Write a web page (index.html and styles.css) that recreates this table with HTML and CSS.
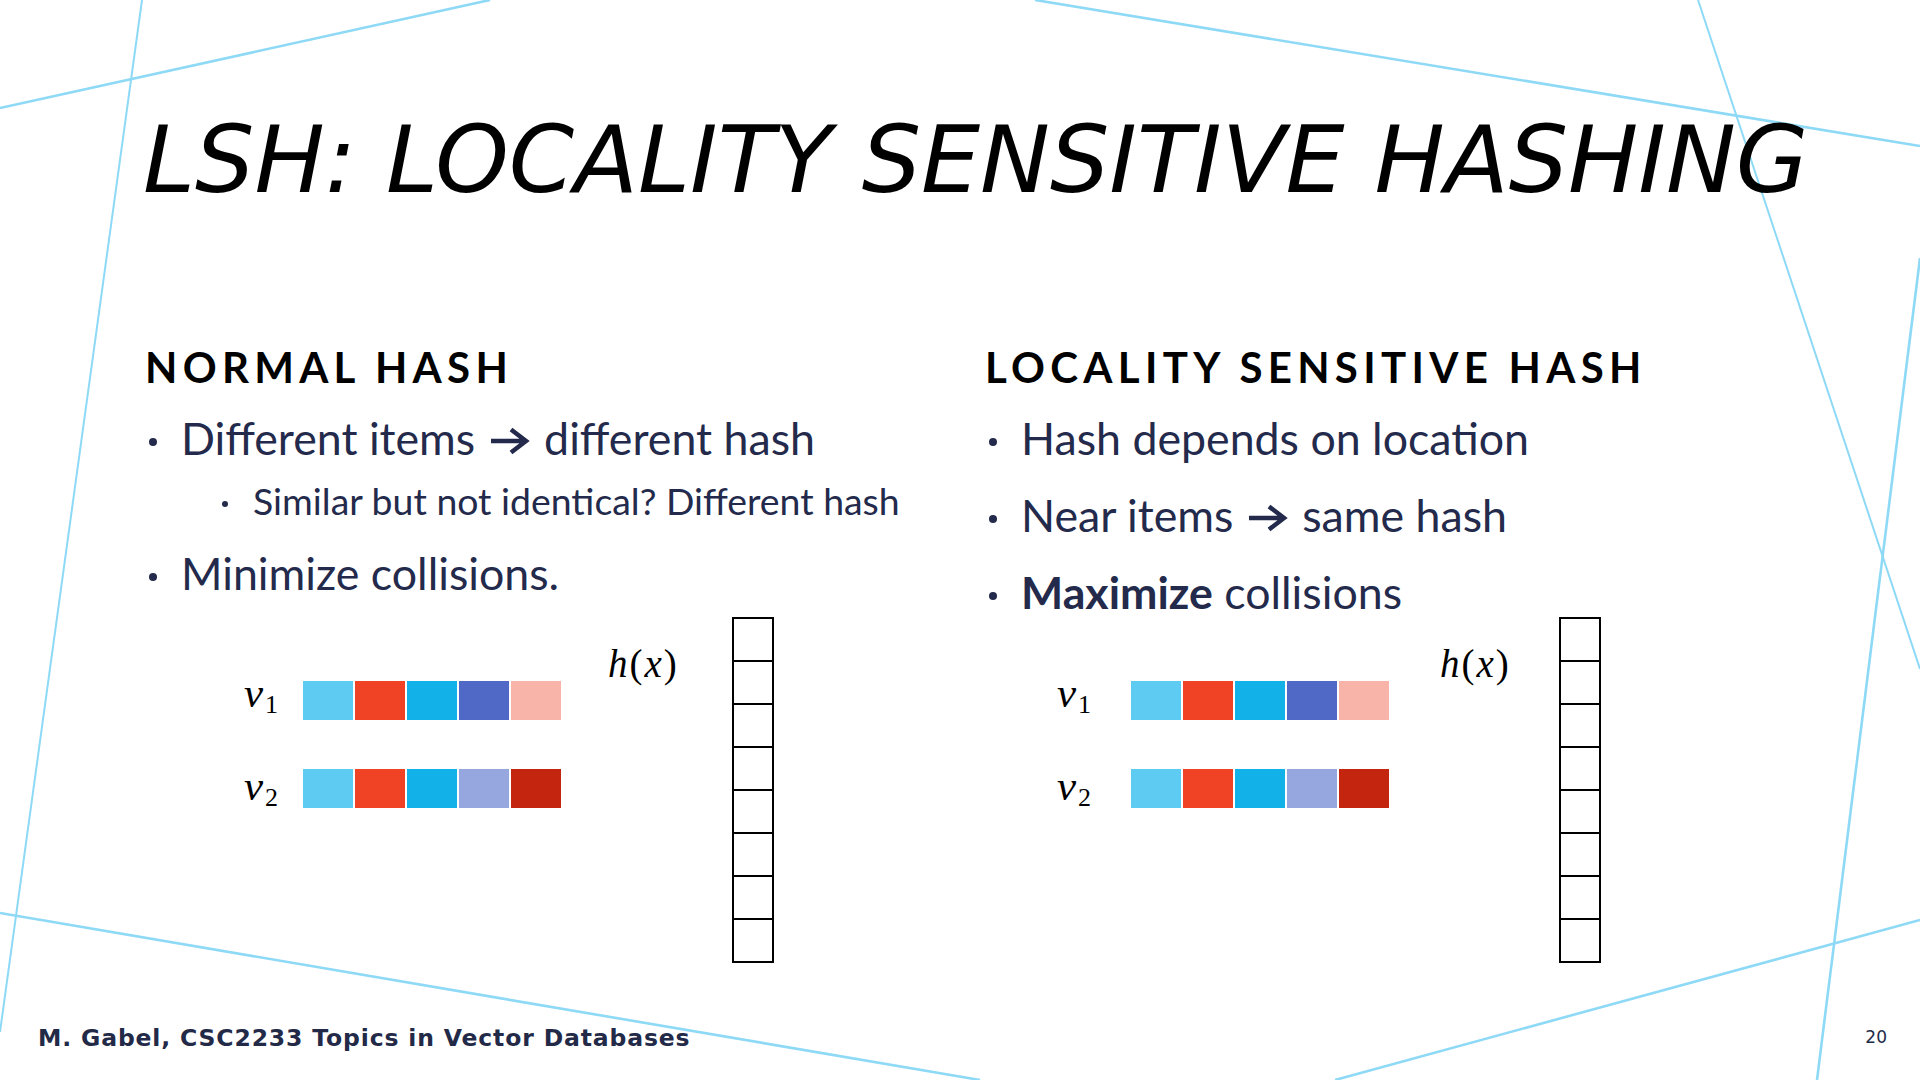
FILE: index.html
```html
<!DOCTYPE html>
<html lang="en">
<head>
<meta charset="utf-8">
<title>LSH: Locality Sensitive Hashing</title>
<link rel="stylesheet" href="styles.css">
</head>
<body>
<div class="slide">
  <svg class="deco" width="1920" height="1080" viewBox="0 0 1920 1080" aria-hidden="true">
    <line x1="0" y1="108" x2="490" y2="0" class="ln thick"/>
    <line x1="142" y1="0" x2="0" y2="1032" class="ln"/>
    <line x1="1035" y1="0" x2="1920" y2="146" class="ln thick"/>
    <line x1="1698" y1="0" x2="1920" y2="669" class="ln"/>
    <line x1="1920" y1="258" x2="1817" y2="1080" class="ln thick"/>
    <line x1="0" y1="913" x2="980" y2="1080" class="ln thick"/>
    <line x1="1335" y1="1080" x2="1920" y2="920" class="ln thick"/>
  </svg>

  <h1 class="title">LSH: LOCALITY SENSITIVE HASHING</h1>

  <div class="columns">
    <section class="col">
      <h2 class="heading">NORMAL HASH</h2>
      <ul class="bullets">
        <li>Different items <svg class="arrow" width="40" height="28" viewBox="0 0 40 28"><path d="M1 14H35M21 2.5L36 14L21 25.5"/></svg> different hash</li>
        <li class="sub">Similar but not identical? Different hash</li>
        <li>Minimize collisions.</li>
      </ul>
    </section>
    <section class="col">
      <h2 class="heading">LOCALITY SENSITIVE HASH</h2>
      <ul class="bullets">
        <li>Hash depends on location</li>
        <li>Near items <svg class="arrow" width="40" height="28" viewBox="0 0 40 28"><path d="M1 14H35M21 2.5L36 14L21 25.5"/></svg> same hash</li>
        <li><b>Maximize</b> collisions</li>
      </ul>
    </section>

    <div class="diagram">
      <div class="labels">
        <span class="vlabel"><i>v</i><sub>1</sub></span>
        <span class="vlabel"><i>v</i><sub>2</sub></span>
      </div>
      <div class="bars">
        <div class="bar"><span class="cell c-sky"></span><span class="cell c-red"></span><span class="cell c-cyan"></span><span class="cell c-indigo"></span><span class="cell c-pink"></span></div>
        <div class="bar"><span class="cell c-sky"></span><span class="cell c-red"></span><span class="cell c-cyan"></span><span class="cell c-lavender"></span><span class="cell c-maroon"></span></div>
      </div>
      <div class="hx"><i>h</i>(<i>x</i>)</div>
      <div class="table">
        <span class="slot"></span><span class="slot"></span><span class="slot"></span><span class="slot"></span>
        <span class="slot"></span><span class="slot"></span><span class="slot"></span><span class="slot"></span>
      </div>
    </div>

    <div class="diagram diagram--lsh">
      <div class="labels">
        <span class="vlabel"><i>v</i><sub>1</sub></span>
        <span class="vlabel"><i>v</i><sub>2</sub></span>
      </div>
      <div class="bars">
        <div class="bar"><span class="cell c-sky"></span><span class="cell c-red"></span><span class="cell c-cyan"></span><span class="cell c-indigo"></span><span class="cell c-pink"></span></div>
        <div class="bar"><span class="cell c-sky"></span><span class="cell c-red"></span><span class="cell c-cyan"></span><span class="cell c-lavender"></span><span class="cell c-maroon"></span></div>
      </div>
      <div class="hx"><i>h</i>(<i>x</i>)</div>
      <div class="table">
        <span class="slot"></span><span class="slot"></span><span class="slot"></span><span class="slot"></span>
        <span class="slot"></span><span class="slot"></span><span class="slot"></span><span class="slot"></span>
      </div>
    </div>
  </div>

  <footer class="footer">
    <span class="credit">M. Gabel, CSC2233 Topics in Vector Databases</span>
    <span class="page">20</span>
  </footer>
</div>
</body>
</html>
```

FILE: styles.css
```css
html, body {
  margin: 0;
  padding: 0;
  background: #ffffff;
}

.slide {
  position: relative;
  z-index: 0;
  width: 1920px;
  height: 1080px;
  overflow: hidden;
  display: flex;
  flex-direction: column;
  padding-top: 105px;
  box-sizing: border-box;
  background: #ffffff;
  color: #232a4b;
  font-family: "Lato", "Open Sans", sans-serif;
}

.deco {
  position: absolute;
  left: 0;
  top: 0;
  z-index: -1;
}

.ln {
  stroke: #8dd9f6;
  stroke-width: 2;
  fill: none;
}

.ln.thick {
  stroke-width: 2.6;
}

.title {
  margin: 0 0 0 143px;
  font-family: "DejaVu Sans", sans-serif;
  font-style: oblique;
  font-weight: normal;
  font-size: 93.5px;
  line-height: 110px;
  color: #000000;
  white-space: nowrap;
}

.columns {
  margin-top: 127px;
  padding-left: 145px;
  display: grid;
  grid-template-columns: 840px 840px;
  grid-template-rows: 275px 346px;
}

.heading {
  margin: 0;
  font-family: "Lato", sans-serif;
  font-weight: 700;
  font-size: 42px;
  line-height: 50px;
  letter-spacing: 0.126em;
  color: #000000;
  white-space: nowrap;
}

.bullets {
  list-style: none;
  margin: 19px 0 0;
  padding: 0;
}

.bullets li {
  font-size: 44.7px;
  line-height: 54px;
  white-space: nowrap;
}

.bullets li::before {
  content: "";
  display: inline-block;
  width: 8px;
  height: 8px;
  border-radius: 50%;
  background: currentColor;
  vertical-align: 9px;
  margin-left: 4px;
  margin-right: 24px;
}

.bullets li + li {
  margin-top: 23px;
}

.bullets li.sub {
  margin-top: 13px;
  padding-left: 73px;
  font-size: 37.4px;
  line-height: 45px;
}

.bullets li.sub::before {
  width: 6px;
  height: 6px;
  vertical-align: 8px;
  margin-right: 25px;
}

.bullets b {
  font-weight: 700;
}

.arrow {
  vertical-align: 0;
  margin: 0 3px;
}

.arrow path {
  fill: none;
  stroke: #232a4b;
  stroke-width: 4.5;
}

/* diagrams */
.diagram {
  display: flex;
  align-items: flex-start;
  font-family: "Liberation Serif", "DejaVu Serif", serif;
  color: #000000;
}

.labels {
  margin-left: 99px;
  width: 59px;
  margin-top: 51px;
  display: flex;
  flex-direction: column;
  gap: 43px;
}

.vlabel {
  font-size: 43px;
  line-height: 50px;
  height: 50px;
}

.vlabel sub {
  font-size: 26px;
  line-height: 0;
  vertical-align: -6px;
  margin-left: 2px;
}

.bars {
  margin-top: 64px;
  display: flex;
  flex-direction: column;
  gap: 49px;
}

.bar {
  display: flex;
  gap: 2px;
}

.cell {
  display: block;
  width: 50px;
  height: 39px;
}

.c-sky { background: #5ecbf2; }
.c-red { background: #f04225; }
.c-cyan { background: #12b2e9; }
.c-indigo { background: #5068c6; }
.c-pink { background: #f9b4a9; }
.c-lavender { background: #96a6de; }
.c-maroon { background: #c3250f; }

.hx {
  margin-left: 47px;
  width: 124px;
  margin-top: 25px;
  font-size: 39px;
  line-height: 44px;
  letter-spacing: 2px;
  white-space: nowrap;
}

.table {
  display: flex;
  flex-direction: column;
  width: 38px;
  border: 2px solid #000000;
  border-top: none;
}

.slot {
  display: block;
  height: 41px;
  border-top: 2px solid #000000;
}

.diagram--lsh .labels {
  margin-left: 72px;
  width: 74px;
}

.diagram--lsh .hx {
  margin-left: 51px;
  width: 119px;
}

/* footer */
.footer {
  margin-top: auto;
  display: flex;
  justify-content: space-between;
  padding: 0 33px 29px 38px;
  color: #232a48;
}

.credit {
  font-family: "DejaVu Sans", sans-serif;
  font-weight: 700;
  font-size: 23.5px;
  line-height: 26px;
  letter-spacing: 0.85px;
  white-space: nowrap;
}

.page {
  align-self: flex-start;
  margin-top: 2px;
  font-family: "DejaVu Sans", sans-serif;
  font-size: 17px;
  line-height: 20px;
}
```
